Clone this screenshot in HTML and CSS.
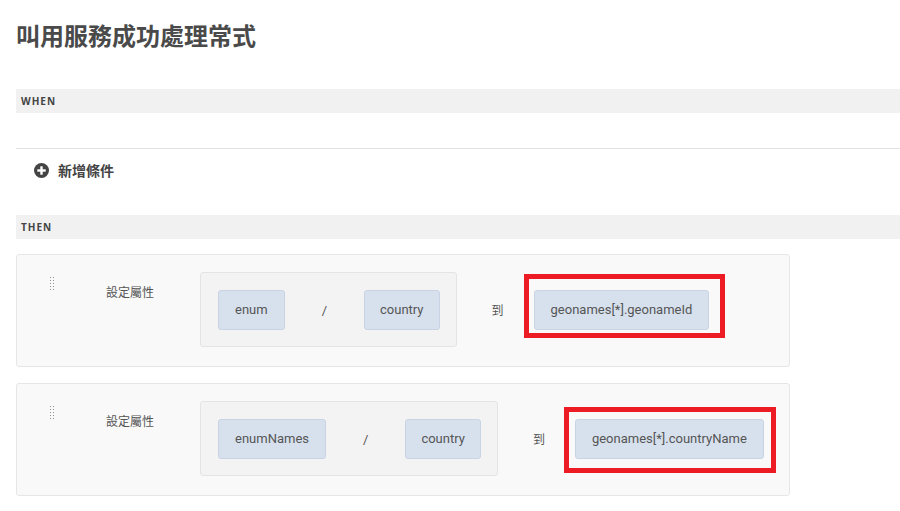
FILE: index.html
```html
<!DOCTYPE html>
<html lang="zh-Hant">
<head>
<meta charset="utf-8">
<title>叫用服務成功處理常式</title>
<link rel="stylesheet" href="styles.css">
</head>
<body>
<div class="page">
  <h1 class="title">叫用服務成功處理常式</h1>

  <div class="section-bar">WHEN</div>
  <div class="when-body"></div>
  <div class="add-row">
    <svg class="plus-icon" width="15" height="15" viewBox="0 0 15 15" aria-hidden="true">
      <circle cx="7.5" cy="7.5" r="7.5" fill="#444"/>
      <rect x="3.3" y="6.3" width="8.4" height="2.4" fill="#fff"/>
      <rect x="6.3" y="3.3" width="2.4" height="8.4" fill="#fff"/>
    </svg>
    <span class="add-text">新增條件</span>
  </div>

  <div class="section-bar then-bar">THEN</div>

  <div class="cards">
    <div class="card">
      <svg class="handle" width="4" height="14" viewBox="0 0 4 14" aria-hidden="true">
        <g fill="#8f8f8f">
          <rect x="0" y="0" width="1" height="1"/><rect x="3" y="0" width="1" height="1"/>
          <rect x="0" y="3" width="1" height="1"/><rect x="3" y="3" width="1" height="1"/>
          <rect x="0" y="6" width="1" height="1"/><rect x="3" y="6" width="1" height="1"/>
          <rect x="0" y="9" width="1" height="1"/><rect x="3" y="9" width="1" height="1"/>
          <rect x="0" y="12" width="1" height="1"/><rect x="3" y="12" width="1" height="1"/>
        </g>
      </svg>
      <div class="label">設定屬性</div>
      <div class="row">
        <div class="group">
          <span class="chip">enum</span>
          <span class="slash">/</span>
          <span class="chip">country</span>
        </div>
        <span class="to">到</span>
        <div class="target">
          <span class="chip">geonames[*].geonameId</span>
          <span class="mark mark-1"></span>
        </div>
      </div>
    </div>

    <div class="card">
      <svg class="handle" width="4" height="14" viewBox="0 0 4 14" aria-hidden="true">
        <g fill="#8f8f8f">
          <rect x="0" y="0" width="1" height="1"/><rect x="3" y="0" width="1" height="1"/>
          <rect x="0" y="3" width="1" height="1"/><rect x="3" y="3" width="1" height="1"/>
          <rect x="0" y="6" width="1" height="1"/><rect x="3" y="6" width="1" height="1"/>
          <rect x="0" y="9" width="1" height="1"/><rect x="3" y="9" width="1" height="1"/>
          <rect x="0" y="12" width="1" height="1"/><rect x="3" y="12" width="1" height="1"/>
        </g>
      </svg>
      <div class="label">設定屬性</div>
      <div class="row">
        <div class="group">
          <span class="chip">enumNames</span>
          <span class="slash">/</span>
          <span class="chip">country</span>
        </div>
        <span class="to">到</span>
        <div class="target">
          <span class="chip">geonames[*].countryName</span>
          <span class="mark mark-2"></span>
        </div>
      </div>
    </div>
  </div>
</div>
</body>
</html>
```

FILE: styles.css
```css
html, body {
  margin: 0;
  padding: 0;
  background: #fff;
  overflow: hidden;
}

body {
  font-family: "Noto Sans CJK TC", "Noto Sans", sans-serif;
  color: #555;
}

.page {
  padding: 20px 0 0 16px;
  display: flex;
  flex-direction: column;
}

.title {
  margin: 0;
  height: 30px;
  font-size: 24px;
  line-height: 30px;
  font-weight: 700;
  color: #4a4a4a;
}

.section-bar {
  margin-top: 39px;
  height: 24px;
  line-height: 24px;
  padding-left: 5px;
  background: #f1f1f1;
  font-family: "Open Sans", "Noto Sans", sans-serif;
  font-size: 10px;
  font-weight: 700;
  letter-spacing: 1px;
  color: #444;
}

.when-body {
  height: 35px;
  border-bottom: 1px solid #e2e2e2;
}

.add-row {
  height: 42px;
  display: flex;
  align-items: center;
  padding-left: 18px;
}

.plus-icon {
  display: block;
  flex: none;
}

.add-text {
  margin-left: 9px;
  font-size: 14px;
  font-weight: 700;
  color: #444;
  line-height: 20px;
}

.then-bar {
  margin-top: 24px;
}

.cards {
  margin-top: 15px;
  display: flex;
  flex-direction: column;
  gap: 16px;
}

.card {
  width: 774px;
  box-sizing: border-box;
  background: #f9f9f9;
  border: 1px solid #e6e6e6;
  border-radius: 3px;
  padding: 17px 0 19px 33px;
  display: flex;
  align-items: flex-start;
}

.handle {
  display: block;
  flex: none;
  margin-top: 5px;
}

.label {
  flex: none;
  width: 94px;
  margin-left: 52px;
  margin-top: 12px;
  font-size: 12px;
  line-height: 16px;
  color: #555;
}

.row {
  display: flex;
  align-items: center;
}

.group {
  display: flex;
  align-items: center;
  background: #f3f3f3;
  border: 1px solid #e4e4e4;
  border-radius: 3px;
  padding: 17px 16px 16px 17px;
}

.chip {
  display: inline-block;
  height: 40px;
  box-sizing: border-box;
  line-height: 38px;
  padding: 0 16px;
  background: #d7e1ee;
  border: 1px solid #c8d3e3;
  border-radius: 3px;
  font-family: Roboto, "Liberation Sans", sans-serif;
  font-size: 13px;
  color: #555;
  white-space: nowrap;
}

.group .chip + .slash + .chip {
  padding: 0 15px;
}

.slash {
  margin: 0 37px;
  font-family: Roboto, "Liberation Sans", sans-serif;
  font-size: 13px;
  color: #555;
}

.to {
  margin-left: 35px;
  margin-right: 30px;
  font-size: 12px;
  color: #555;
}

.target {
  position: relative;
  display: flex;
}

.mark {
  position: absolute;
  border: 5px solid #ed1c24;
  pointer-events: none;
}

.mark-1 {
  left: -10px;
  top: -16px;
  right: -16px;
  bottom: -8px;
}

.mark-2 {
  left: -11px;
  top: -12px;
  right: -12px;
  bottom: -14px;
}
```
